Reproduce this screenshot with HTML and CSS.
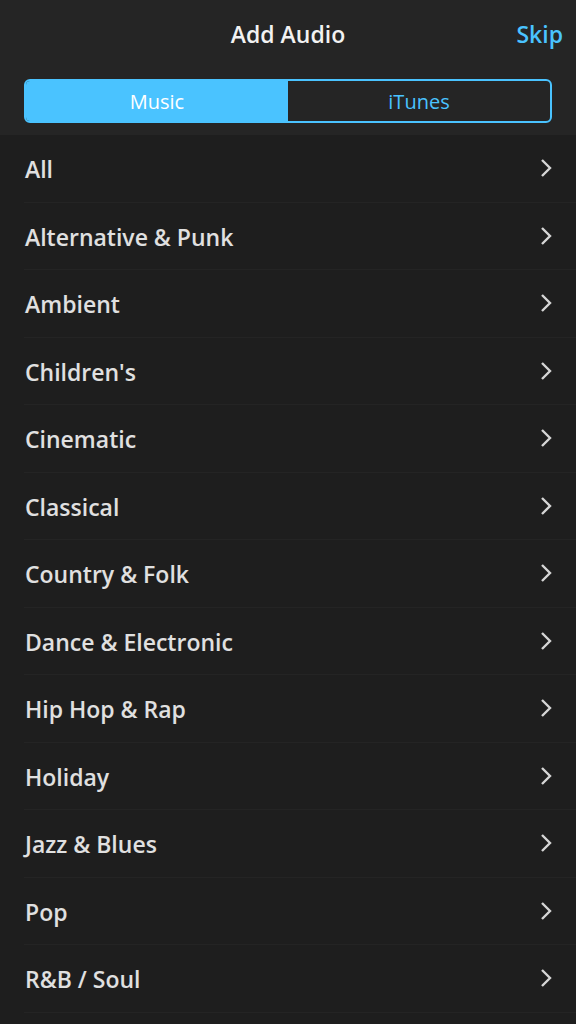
FILE: index.html
```html
<!DOCTYPE html>
<html lang="en">
<head>
    <meta charset="UTF-8">
    <meta name="viewport" content="width=device-width, initial-scale=1.0">
    <title>Add Audio</title>
    <link rel="stylesheet" href="styles.css">
</head>
<body>
    <div class="header">
        <div class="title-bar">
            <h1>Add Audio</h1>
            <a class="skip" href="#">Skip</a>
        </div>
        <div class="segments">
            <button class="segment active">Music</button>
            <button class="segment">iTunes</button>
        </div>
    </div>

    <!-- genre list -->
    <ul class="genres">
        <li><span>All</span><svg class="chevron" viewBox="0 0 12 20"><path d="M2 2l8 8-8 8"/></svg></li>
        <li><span>Alternative &amp; Punk</span><svg class="chevron" viewBox="0 0 12 20"><path d="M2 2l8 8-8 8"/></svg></li>
        <li><span>Ambient</span><svg class="chevron" viewBox="0 0 12 20"><path d="M2 2l8 8-8 8"/></svg></li>
        <li><span>Children's</span><svg class="chevron" viewBox="0 0 12 20"><path d="M2 2l8 8-8 8"/></svg></li>
        <li><span>Cinematic</span><svg class="chevron" viewBox="0 0 12 20"><path d="M2 2l8 8-8 8"/></svg></li>
        <li><span>Classical</span><svg class="chevron" viewBox="0 0 12 20"><path d="M2 2l8 8-8 8"/></svg></li>
        <li><span>Country &amp; Folk</span><svg class="chevron" viewBox="0 0 12 20"><path d="M2 2l8 8-8 8"/></svg></li>
        <li><span>Dance &amp; Electronic</span><svg class="chevron" viewBox="0 0 12 20"><path d="M2 2l8 8-8 8"/></svg></li>
        <li><span>Hip Hop &amp; Rap</span><svg class="chevron" viewBox="0 0 12 20"><path d="M2 2l8 8-8 8"/></svg></li>
        <li><span>Holiday</span><svg class="chevron" viewBox="0 0 12 20"><path d="M2 2l8 8-8 8"/></svg></li>
        <li><span>Jazz &amp; Blues</span><svg class="chevron" viewBox="0 0 12 20"><path d="M2 2l8 8-8 8"/></svg></li>
        <li><span>Pop</span><svg class="chevron" viewBox="0 0 12 20"><path d="M2 2l8 8-8 8"/></svg></li>
        <li><span>R&amp;B / Soul</span><svg class="chevron" viewBox="0 0 12 20"><path d="M2 2l8 8-8 8"/></svg></li>
    </ul>
</body>
</html>
```

FILE: styles.css
```css
body {
    margin: 0;
    font-family: "Open Sans", "Noto Sans", sans-serif;
    background-color: #1e1e1e;
    color: #e0e0e0;
    height: 1024px;
    overflow: hidden;
}
.header {
    background-color: #252525;
    padding: 0 24px 12px;
}
.title-bar {
    height: 70px;
    display: flex;
    align-items: center;
    justify-content: center;
    position: relative;
}
.title-bar h1 {
    margin: -2px 0 0;
    font-size: 23px;
    font-weight: 600;
    color: #f2f2f2;
}
.skip {
    position: absolute;
    right: -11px;
    top: 18px;
    font-size: 23px;
    font-weight: 600;
    color: #4ac3ff;
    text-decoration: none;
}
.segments {
    display: flex;
    margin-top: 9px;
    height: 44px;
    border: 2px solid #4ac3ff;
    border-radius: 6px;
    overflow: hidden;
    box-sizing: border-box;
}
.segment {
    flex: 1;
    border: none;
    background: transparent;
    color: #4ac3ff;
    font-family: inherit;
    font-size: 20px;
    padding: 0;
}
.segment.active {
    background-color: #4ac3ff;
    color: #ffffff;
}
.genres {
    list-style: none;
    margin: 0;
    padding: 0;
}
.genres li {
    height: 67.5px;
    margin-left: 24px;
    padding: 2px 24px 0 1px;
    display: flex;
    align-items: center;
    justify-content: space-between;
    border-bottom: 1px solid #242424;
    box-sizing: border-box;
    font-size: 23px;
    font-weight: 600;
}
.chevron {
    width: 12px;
    height: 20px;
    margin-top: -2px;
    fill: none;
    stroke: #d6d6d6;
    stroke-width: 2.4;
}
```
